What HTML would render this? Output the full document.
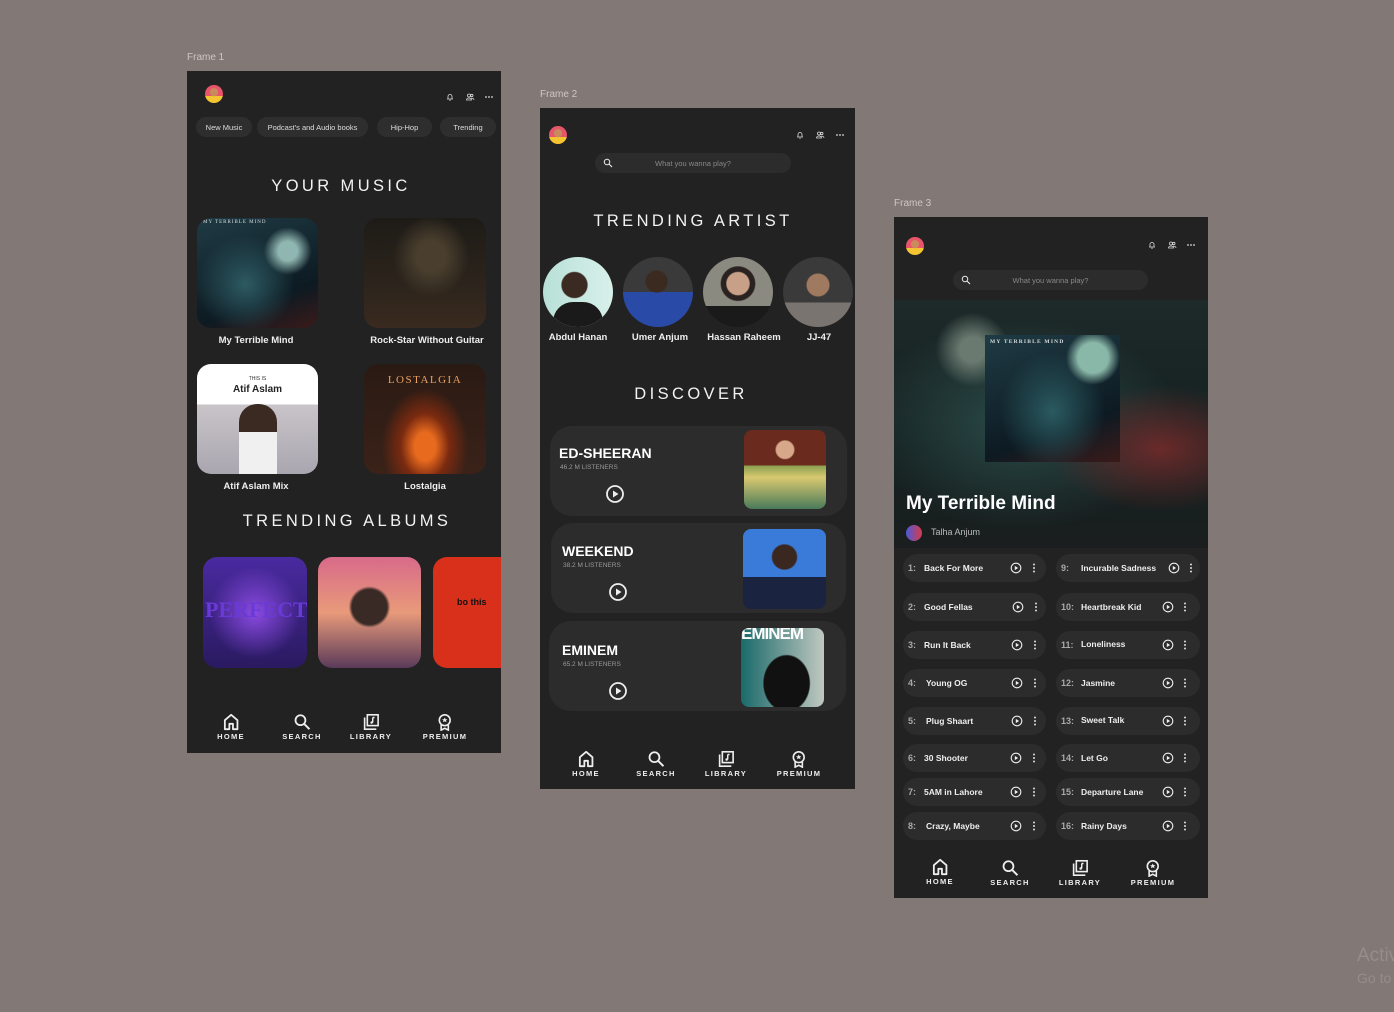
<!DOCTYPE html>
<html><head><meta charset="utf-8">
<style>
*{margin:0;padding:0;box-sizing:border-box}
html,body{width:1394px;height:1012px;overflow:hidden;background:#827876;font-family:"Liberation Sans",sans-serif;color:#fff}
.a{position:absolute}
.frame{position:absolute;background:#222;overflow:hidden}
.flabel{position:absolute;font-size:10px;color:#cfc6c4}
.pill{position:absolute;height:20px;border-radius:10px;background:#2e2e2e;font-size:7.5px;color:#ddd;display:flex;align-items:center;justify-content:center}
.title{position:absolute;font-size:16.5px;letter-spacing:3.4px;color:#f2f2f2;white-space:nowrap;transform:translateX(-50%)}
.lbl{position:absolute;font-size:9.5px;font-weight:bold;color:#eee;white-space:nowrap;transform:translateX(-50%)}
.img{position:absolute;border-radius:14px;overflow:hidden}
.av{position:absolute;width:18px;height:18px;border-radius:50%;background:radial-gradient(circle at 50% 40%,#c98a5c 0 28%,transparent 30%),linear-gradient(#e8556a 0 60%,#f4c531 60%)}
.nav{position:absolute;transform:translateX(-50%);text-align:center;font-size:7.5px;font-weight:bold;letter-spacing:1.3px;color:#eee}
.nav svg{display:block;margin:0 auto 1px}
.search{position:absolute;height:20px;border-radius:10px;background:#2c2c2c;font-size:7.5px;color:#888;display:flex;align-items:center;justify-content:center}
.card{position:absolute;border-radius:22px;background:#2c2c2c}
.row{position:absolute;height:28px;border-radius:14px;background:#2c2c2c;font-size:8.5px;font-weight:bold;color:#eee}
.row .n{position:absolute;left:5px;top:9px;color:#aaa;font-size:9px}
.row .t{position:absolute;top:9px;white-space:nowrap}
.row svg{position:absolute;top:8px}
.circ{position:absolute;width:70px;height:70px;border-radius:50%;overflow:hidden}
</style></head><body>
<svg width="0" height="0" style="position:absolute">
<defs>
<symbol id="bell" viewBox="0 0 10 10"><path d="M3 7V4.5a2 2 0 0 1 4 0V7h1H2zM4.3 8.2h1.4" fill="none" stroke="#ddd" stroke-width=".8"/></symbol>
<symbol id="ppl" viewBox="0 0 10 10"><circle cx="4" cy="3.5" r="1.5" fill="none" stroke="#ddd" stroke-width=".8"/><circle cx="6.8" cy="3.5" r="1.2" fill="none" stroke="#ddd" stroke-width=".8"/><path d="M1.5 8a2.5 2 0 0 1 5 0zM6 6.2a2.3 2 0 0 1 3 1.8" fill="none" stroke="#ddd" stroke-width=".8"/></symbol>
<symbol id="dots" viewBox="0 0 10 10"><circle cx="2" cy="5" r=".9" fill="#ddd"/><circle cx="5" cy="5" r=".9" fill="#ddd"/><circle cx="8" cy="5" r=".9" fill="#ddd"/></symbol>
<symbol id="mag" viewBox="0 0 20 20"><circle cx="8" cy="8" r="5.5" fill="none" stroke="#eee" stroke-width="2"/><path d="M12 12l6 6" stroke="#eee" stroke-width="2.2"/></symbol>
<symbol id="home" viewBox="0 0 20 20"><path d="M3 18V8l7-6 7 6v10h-5v-6H8v6z" fill="none" stroke="#eee" stroke-width="2" stroke-linejoin="round"/></symbol>
<symbol id="lib" viewBox="0 0 20 20"><rect x="6" y="2" width="12" height="12" fill="none" stroke="#eee" stroke-width="1.8"/><path d="M3 5v13h13" fill="none" stroke="#eee" stroke-width="1.8"/><path d="M12 5v5.5" stroke="#eee" stroke-width="1.6"/><circle cx="10.8" cy="10.5" r="1.4" fill="#eee"/><path d="M12 5h2" stroke="#eee" stroke-width="1.6"/></symbol>
<symbol id="prem" viewBox="0 0 20 20"><circle cx="10" cy="8" r="6" fill="none" stroke="#eee" stroke-width="1.8"/><path d="M10 5l1 2h2l-1.6 1.3.6 2L10 9.2 8 10.3l.6-2L7 7h2z" fill="#eee"/><path d="M6 13v6l4-2 4 2v-6" fill="none" stroke="#eee" stroke-width="1.8"/></symbol>
<symbol id="play" viewBox="0 0 20 20"><circle cx="10" cy="10" r="8" fill="none" stroke="#eee" stroke-width="1.8"/><path d="M8 6.5v7l5.5-3.5z" fill="#eee"/></symbol>
<symbol id="kb" viewBox="0 0 4 12"><circle cx="2" cy="2.5" r="1" fill="#ddd"/><circle cx="2" cy="6" r="1" fill="#ddd"/><circle cx="2" cy="9.5" r="1" fill="#ddd"/></symbol>
</defs></svg>

<div class="flabel" style="left:187px;top:52px">Frame 1</div>
<div class="flabel" style="left:540px;top:89px">Frame 2</div>
<div class="flabel" style="left:894px;top:198px">Frame 3</div>
<div class="a" style="left:1357px;top:945px;font-size:19px;color:#968c8a">Activ</div>
<div class="a" style="left:1357px;top:970px;font-size:14px;color:#968c8a">Go to</div>

<!-- FRAME 1 -->
<div class="frame" style="left:187px;top:71px;width:314px;height:682px">
  <div class="av" style="left:18px;top:14px"></div>
  <svg class="a" style="left:258px;top:21px" width="10" height="10"><use href="#bell"/></svg>
  <svg class="a" style="left:278px;top:21px" width="10" height="10"><use href="#ppl"/></svg>
  <svg class="a" style="left:297px;top:21px" width="10" height="10"><use href="#dots"/></svg>
  <div class="pill" style="left:9px;top:46px;width:56px">New Music</div>
  <div class="pill" style="left:70px;top:46px;width:111px">Podcast's and Audio books</div>
  <div class="pill" style="left:190px;top:46px;width:55px">Hip-Hop</div>
  <div class="pill" style="left:253px;top:46px;width:56px">Trending</div>
  <div class="title" style="left:154px;top:106px">YOUR MUSIC</div>
  <div class="img" style="left:10px;top:147px;width:121px;height:110px;background:radial-gradient(circle at 75% 30%,#8fb6b0 0 8%,transparent 20%),radial-gradient(circle at 40% 60%,#2d5a62,transparent 50%),linear-gradient(160deg,#1f3b45,#0d1a22 70%,#3a1a1a)"><div class="a" style="left:6px;top:2px;font-size:5px;color:#ddd;font-family:'Liberation Serif',serif;letter-spacing:1px">MY TERRIBLE MIND</div></div>
  <div class="img" style="left:177px;top:147px;width:122px;height:110px;background:radial-gradient(ellipse at 55% 35%,#4a3f2e 0 15%,transparent 40%),linear-gradient(#1e1b17,#2c241c 60%,#3a2a1f)"></div>
  <div class="lbl" style="left:69px;top:264px">My Terrible Mind</div>
  <div class="lbl" style="left:240px;top:264px">Rock-Star Without Guitar</div>
  <div class="img" style="left:10px;top:293px;width:121px;height:110px;background:linear-gradient(#fff 0 37%,#c8c4c8 37%,#aaa6b0)"><div class="a" style="left:0;width:121px;top:12px;text-align:center;font-size:5px;color:#333">THIS IS</div><div class="a" style="left:0;width:121px;top:20px;text-align:center;font-size:10px;font-weight:bold;color:#222">Atif Aslam</div><div class="a" style="left:42px;top:40px;width:38px;height:70px;border-radius:18px 18px 0 0;background:linear-gradient(#3a2a22 0 40%,#f0f0f0 40%)"></div></div>
  <div class="img" style="left:177px;top:293px;width:122px;height:110px;background:radial-gradient(ellipse at 50% 75%,#e86a1e 0 12%,#7a2a10 28%,transparent 50%),linear-gradient(#2a1a14,#3a2218)"><div class="a" style="left:0;width:122px;top:10px;text-align:center;font-size:11px;font-family:'Liberation Serif',serif;color:#e8a060;letter-spacing:1.5px">LOSTALGIA</div></div>
  <div class="lbl" style="left:69px;top:410px">Atif Aslam Mix</div>
  <div class="lbl" style="left:238px;top:410px">Lostalgia</div>
  <div class="title" style="left:160px;top:441px">TRENDING ALBUMS</div>
  <div class="img" style="left:16px;top:486px;width:104px;height:111px;background:radial-gradient(circle at 50% 50%,#8a4ae0,transparent 60%),linear-gradient(#4a2aa0,#2a1a60)"><div class="a" style="left:2px;top:40px;font-size:22px;font-weight:bold;color:#6a3ad8;font-family:'Liberation Serif',serif">PERFECT</div></div>
  <div class="img" style="left:131px;top:486px;width:103px;height:111px;background:radial-gradient(circle at 50% 45%,#3a2a26 0 22%,transparent 26%),linear-gradient(#d86a8a,#e89a7a 50%,#5a3a5a)"></div>
  <div class="img" style="left:246px;top:486px;width:80px;height:111px;background:#d8301a"><div class="a" style="left:24px;top:40px;font-size:9px;font-weight:bold;color:#111">bo this</div></div>
  <div class="nav" style="left:44px;top:642px"><svg width="18" height="18"><use href="#home"/></svg>HOME</div>
  <div class="nav" style="left:115px;top:642px"><svg width="18" height="18"><use href="#mag"/></svg>SEARCH</div>
  <div class="nav" style="left:184px;top:642px"><svg width="18" height="18"><use href="#lib"/></svg>LIBRARY</div>
  <div class="nav" style="left:258px;top:642px"><svg width="18" height="18"><use href="#prem"/></svg>PREMIUM</div>
</div>

<!-- FRAME 2 -->
<div class="frame" style="left:540px;top:108px;width:315px;height:681px">
  <div class="av" style="left:9px;top:18px"></div>
  <svg class="a" style="left:255px;top:22px" width="10" height="10"><use href="#bell"/></svg>
  <svg class="a" style="left:275px;top:22px" width="10" height="10"><use href="#ppl"/></svg>
  <svg class="a" style="left:295px;top:22px" width="10" height="10"><use href="#dots"/></svg>
  <div class="search" style="left:55px;top:45px;width:196px"><svg class="a" style="left:8px;top:5px" width="10" height="10"><use href="#mag"/></svg>What you wanna play?</div>
  <div class="title" style="left:153px;top:104px">TRENDING ARTIST</div>
  <div class="circ" style="left:3px;top:149px;background:radial-gradient(circle at 45% 40%,#3a2a22 0 22%,transparent 24%),linear-gradient(90deg,#b8e0d8,#d8f0ea);"><div class="a" style="left:10px;top:45px;width:50px;height:30px;background:#1a1a1a;border-radius:20px 20px 0 0"></div></div>
  <div class="circ" style="left:83px;top:149px;background:radial-gradient(circle at 48% 35%,#3a2a20 0 18%,transparent 20%),linear-gradient(#3a3a3a 0 50%,#2a4aa8 50%)"></div>
  <div class="circ" style="left:163px;top:149px;background:radial-gradient(circle at 50% 38%,#c8a088 0 20%,#2a2220 22% 30%,transparent 32%),linear-gradient(#8a8a80 0 70%,#1a1a1a 70%)"></div>
  <div class="circ" style="left:243px;top:149px;background:radial-gradient(circle at 50% 40%,#a07a60 0 20%,transparent 22%),linear-gradient(#3a3a3a 0 65%,#7a7470 65%)"></div>
  <div class="lbl" style="left:38px;top:224px">Abdul Hanan</div>
  <div class="lbl" style="left:120px;top:224px">Umer Anjum</div>
  <div class="lbl" style="left:204px;top:224px">Hassan Raheem</div>
  <div class="lbl" style="left:279px;top:224px">JJ-47</div>
  <div class="title" style="left:151px;top:277px">DISCOVER</div>

  <div class="card" style="left:10px;top:318px;width:297px;height:90px">
    <div class="a" style="left:9px;top:19px;font-size:14px;font-weight:bold">ED-SHEERAN</div>
    <div class="a" style="left:10px;top:38px;font-size:6.5px;color:#999">46.2 M LISTENERS</div>
    <svg class="a" style="left:55px;top:58px" width="20" height="20"><use href="#play"/></svg>
    <div class="img" style="left:194px;top:4px;width:82px;height:79px;border-radius:8px;background:radial-gradient(circle at 50% 25%,#d8a88a 0 12%,transparent 14%),linear-gradient(#6a2a1e 0 45%,#8aa050 45%,#d8c870 60%,#4a7a5a)"></div>
  </div>
  <div class="card" style="left:11px;top:415px;width:295px;height:90px">
    <div class="a" style="left:11px;top:20px;font-size:14px;font-weight:bold">WEEKEND</div>
    <div class="a" style="left:12px;top:39px;font-size:6.5px;color:#999">38.2 M LISTENERS</div>
    <svg class="a" style="left:57px;top:59px" width="20" height="20"><use href="#play"/></svg>
    <div class="img" style="left:192px;top:6px;width:83px;height:80px;border-radius:8px;background:radial-gradient(circle at 50% 35%,#3a2820 0 18%,transparent 20%),linear-gradient(#3a7ad8 0 60%,#1a2440 60%)"></div>
  </div>
  <div class="card" style="left:9px;top:513px;width:297px;height:90px">
    <div class="a" style="left:13px;top:21px;font-size:14px;font-weight:bold">EMINEM</div>
    <div class="a" style="left:14px;top:40px;font-size:6.5px;color:#999">65.2 M LISTENERS</div>
    <svg class="a" style="left:59px;top:60px" width="20" height="20"><use href="#play"/></svg>
    <div class="img" style="left:192px;top:7px;width:83px;height:79px;border-radius:8px;background:radial-gradient(ellipse at 55% 70%,#111 0 35%,transparent 37%),linear-gradient(90deg,#1a6a6a,#c0c8c0)"><div class="a" style="left:0;top:-4px;font-size:17px;font-weight:bold;color:#fff;letter-spacing:-1px">EMINEM</div></div>
  </div>
  <div class="nav" style="left:46px;top:642px"><svg width="18" height="18"><use href="#home"/></svg>HOME</div>
  <div class="nav" style="left:116px;top:642px"><svg width="18" height="18"><use href="#mag"/></svg>SEARCH</div>
  <div class="nav" style="left:186px;top:642px"><svg width="18" height="18"><use href="#lib"/></svg>LIBRARY</div>
  <div class="nav" style="left:259px;top:642px"><svg width="18" height="18"><use href="#prem"/></svg>PREMIUM</div>
</div>

<!-- FRAME 3 -->
<div class="frame" style="left:894px;top:217px;width:314px;height:681px">
  <div class="av" style="left:12px;top:20px"></div>
  <svg class="a" style="left:253px;top:23px" width="10" height="10"><use href="#bell"/></svg>
  <svg class="a" style="left:273px;top:23px" width="10" height="10"><use href="#ppl"/></svg>
  <svg class="a" style="left:292px;top:23px" width="10" height="10"><use href="#dots"/></svg>
  <div class="search" style="left:59px;top:53px;width:195px"><svg class="a" style="left:8px;top:5px" width="10" height="10"><use href="#mag"/></svg>What you wanna play?</div>
  <div class="a" style="left:0;top:83px;width:314px;height:248px;background:radial-gradient(circle at 25% 20%,#6a7a70 0 4%,transparent 12%),radial-gradient(ellipse at 85% 60%,#6a2a2a,transparent 30%),radial-gradient(ellipse at 40% 50%,#2a4a48,transparent 60%),linear-gradient(#1e2a2a,#142020 60%,#1a1e1e)"></div>
  <div class="a" style="left:91px;top:118px;width:135px;height:127px;background:radial-gradient(circle at 80% 18%,#8ab8a8 0 10%,transparent 18%),radial-gradient(ellipse at 50% 60%,#2a5a60,transparent 55%),linear-gradient(160deg,#1f3b45,#0d1a22 70%,#3a1a1a)"><div class="a" style="left:5px;top:4px;font-size:5.5px;color:#ddd;font-family:'Liberation Serif',serif;letter-spacing:1.2px;font-weight:bold">MY TERRIBLE MIND</div></div>
  <div class="a" style="left:12px;top:276px;font-size:19px;font-weight:bold">My Terrible Mind</div>
  <div class="a" style="left:12px;top:308px;width:16px;height:16px;border-radius:50%;background:linear-gradient(90deg,#4a5ad8,#d83a4a)"></div>
  <div class="a" style="left:37px;top:310px;font-size:9px;color:#bbb">Talha Anjum</div>

  <div class="row" style="left:9px;top:337px;width:143px"><span class="n">1:</span><span class="t" style="left:21px">Back For More</span><svg style="left:107px" width="12" height="12"><use href="#play"/></svg><svg style="left:129px" width="4" height="12"><use href="#kb"/></svg></div>
  <div class="row" style="left:9px;top:376px;width:143px"><span class="n">2:</span><span class="t" style="left:21px">Good Fellas</span><svg style="left:109px" width="12" height="12"><use href="#play"/></svg><svg style="left:131px" width="4" height="12"><use href="#kb"/></svg></div>
  <div class="row" style="left:9px;top:414px;width:143px"><span class="n">3:</span><span class="t" style="left:21px">Run It Back</span><svg style="left:108px" width="12" height="12"><use href="#play"/></svg><svg style="left:130px" width="4" height="12"><use href="#kb"/></svg></div>
  <div class="row" style="left:9px;top:452px;width:143px"><span class="n">4:</span><span class="t" style="left:23px">Young OG</span><svg style="left:108px" width="12" height="12"><use href="#play"/></svg><svg style="left:130px" width="4" height="12"><use href="#kb"/></svg></div>
  <div class="row" style="left:9px;top:490px;width:143px"><span class="n">5:</span><span class="t" style="left:23px">Plug Shaart</span><svg style="left:108px" width="12" height="12"><use href="#play"/></svg><svg style="left:130px" width="4" height="12"><use href="#kb"/></svg></div>
  <div class="row" style="left:9px;top:527px;width:143px"><span class="n">6:</span><span class="t" style="left:21px">30 Shooter</span><svg style="left:107px" width="12" height="12"><use href="#play"/></svg><svg style="left:129px" width="4" height="12"><use href="#kb"/></svg></div>
  <div class="row" style="left:9px;top:561px;width:143px"><span class="n">7:</span><span class="t" style="left:21px">5AM in Lahore</span><svg style="left:107px" width="12" height="12"><use href="#play"/></svg><svg style="left:129px" width="4" height="12"><use href="#kb"/></svg></div>
  <div class="row" style="left:9px;top:595px;width:143px"><span class="n">8:</span><span class="t" style="left:23px">Crazy, Maybe</span><svg style="left:107px" width="12" height="12"><use href="#play"/></svg><svg style="left:129px" width="4" height="12"><use href="#kb"/></svg></div>

  <div class="row" style="left:162px;top:337px;width:144px"><span class="n">9:</span><span class="t" style="left:25px">Incurable Sadness</span><svg style="left:112px" width="12" height="12"><use href="#play"/></svg><svg style="left:133px" width="4" height="12"><use href="#kb"/></svg></div>
  <div class="row" style="left:162px;top:376px;width:144px"><span class="n">10:</span><span class="t" style="left:25px">Heartbreak Kid</span><svg style="left:106px" width="12" height="12"><use href="#play"/></svg><svg style="left:127px" width="4" height="12"><use href="#kb"/></svg></div>
  <div class="row" style="left:162px;top:414px;width:144px"><span class="n">11:</span><span class="t" style="left:25px;top:8px">Loneliness</span><svg style="left:106px" width="12" height="12"><use href="#play"/></svg><svg style="left:127px" width="4" height="12"><use href="#kb"/></svg></div>
  <div class="row" style="left:162px;top:452px;width:144px"><span class="n">12:</span><span class="t" style="left:25px">Jasmine</span><svg style="left:106px" width="12" height="12"><use href="#play"/></svg><svg style="left:127px" width="4" height="12"><use href="#kb"/></svg></div>
  <div class="row" style="left:162px;top:490px;width:144px"><span class="n">13:</span><span class="t" style="left:25px;top:8px">Sweet Talk</span><svg style="left:106px" width="12" height="12"><use href="#play"/></svg><svg style="left:127px" width="4" height="12"><use href="#kb"/></svg></div>
  <div class="row" style="left:162px;top:527px;width:144px"><span class="n">14:</span><span class="t" style="left:25px">Let Go</span><svg style="left:106px" width="12" height="12"><use href="#play"/></svg><svg style="left:127px" width="4" height="12"><use href="#kb"/></svg></div>
  <div class="row" style="left:162px;top:561px;width:144px"><span class="n">15:</span><span class="t" style="left:25px">Departure Lane</span><svg style="left:106px" width="12" height="12"><use href="#play"/></svg><svg style="left:127px" width="4" height="12"><use href="#kb"/></svg></div>
  <div class="row" style="left:162px;top:595px;width:144px"><span class="n">16:</span><span class="t" style="left:25px">Rainy Days</span><svg style="left:106px" width="12" height="12"><use href="#play"/></svg><svg style="left:127px" width="4" height="12"><use href="#kb"/></svg></div>

  <div class="nav" style="left:46px;top:641px"><svg width="18" height="18"><use href="#home"/></svg>HOME</div>
  <div class="nav" style="left:116px;top:642px"><svg width="18" height="18"><use href="#mag"/></svg>SEARCH</div>
  <div class="nav" style="left:186px;top:642px"><svg width="18" height="18"><use href="#lib"/></svg>LIBRARY</div>
  <div class="nav" style="left:259px;top:642px"><svg width="18" height="18"><use href="#prem"/></svg>PREMIUM</div>
</div>
</body></html>
